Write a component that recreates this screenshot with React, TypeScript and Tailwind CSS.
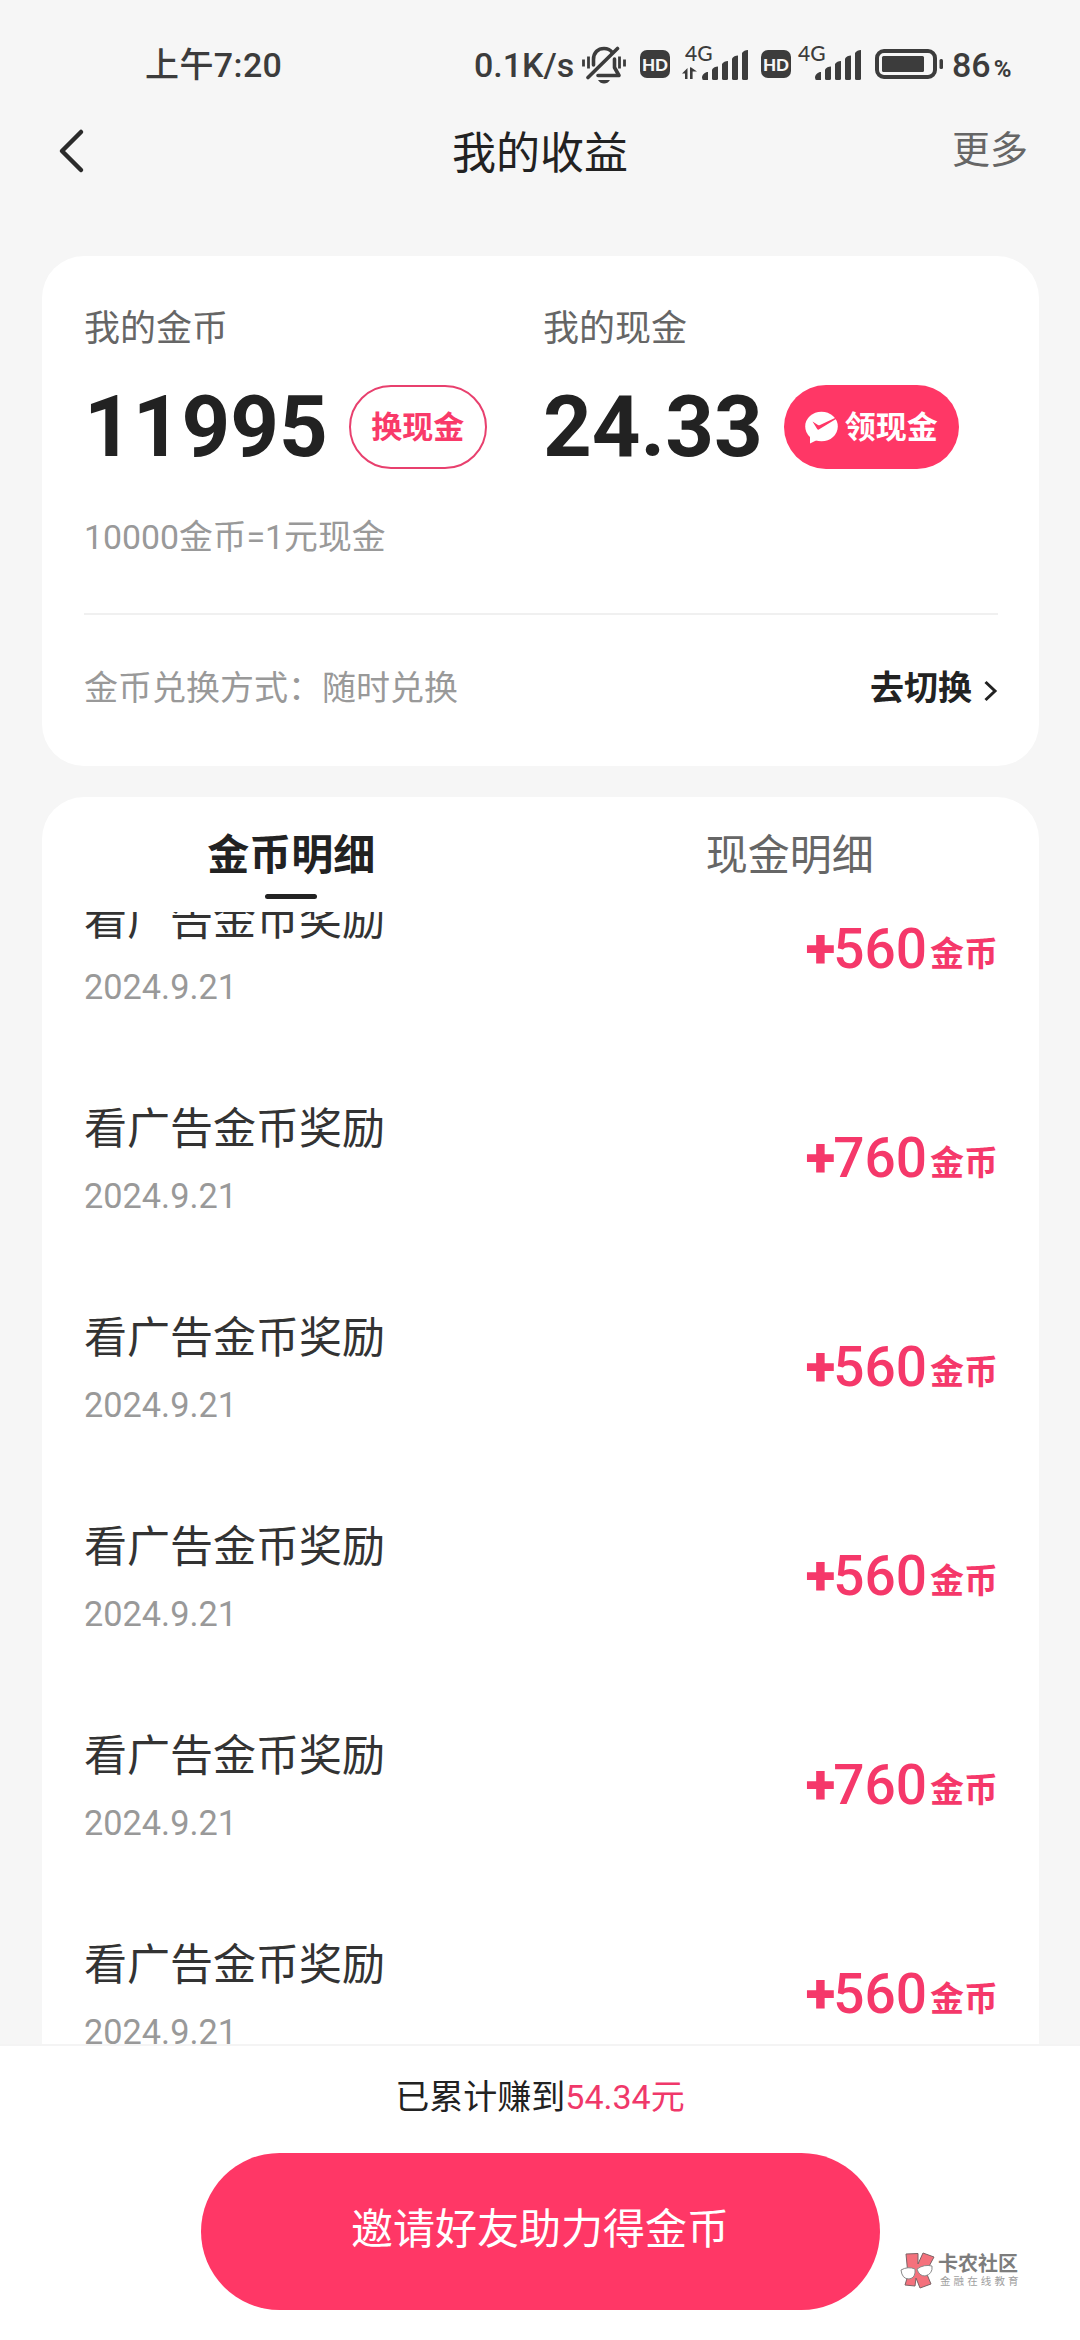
import { clsx } from "clsx";

type CoinRecord = {
  id: number;
  title: string;
  date: string;
  amount: number;
};

const RECORDS: CoinRecord[] = [
  { id: 1, title: "看广告金币奖励", date: "2024.9.21", amount: 560 },
  { id: 2, title: "看广告金币奖励", date: "2024.9.21", amount: 760 },
  { id: 3, title: "看广告金币奖励", date: "2024.9.21", amount: 560 },
  { id: 4, title: "看广告金币奖励", date: "2024.9.21", amount: 560 },
  { id: 5, title: "看广告金币奖励", date: "2024.9.21", amount: 760 },
  { id: 6, title: "看广告金币奖励", date: "2024.9.21", amount: 560 },
];

function MutedBellIcon() {
  return (
    <svg className="w-[44px] h-[38px]" viewBox="0 0 44 38" fill="none" aria-hidden="true">
      <g stroke="#3c3c3c" strokeWidth="3.6" strokeLinecap="round" strokeLinejoin="round">
        <path d="M11.5 19V13.5C11.5 6.5 16 2.500 22 2.500c3.500 0 6.500 1.500 8.300 4" />
        <path d="M32.500 13v8.500l4.500 8H16" />
        <path d="M35.500 2.500 6 31.500" />
      </g>
      <path d="M16 34h12c-1.500 2.500-3.500 3.500-6 3.500s-4.500-1-6-3.500z" fill="#3c3c3c" />
      <g stroke="#3c3c3c" strokeWidth="2.800">
        <path d="M1.500 13.500v7M6.500 10.500v12M37.500 10.500v12M42.500 13.500v7" />
      </g>
    </svg>
  );
}

function HdBadge({ className }: { className?: string }) {
  return (
    <div
      className={clsx(
        "w-[30px] h-[28px] rounded-[7px] bg-[#3c3c3c] text-[#f6f6f6] flex items-center justify-center font-[Lato] font-black text-[17px] leading-none",
        className,
      )}
    >
      HD
    </div>
  );
}

function Signal({ active, className }: { active?: boolean; className?: string }) {
  return (
    <div className={clsx("relative w-[66px] h-[36px]", className)}>
      <span className="absolute left-[3px] -top-[3px] text-[21px] leading-[24px] font-[Lato] font-medium">
        4G
      </span>
      <svg className="w-[66px] h-[36px]" viewBox="0 0 66 36" fill="#3c3c3c" aria-hidden="true">
        {active && (
          <path d="M0 29.500 5.500 24v11H3v-5.500zM8 24v11h2.600v-7.500h4.400L8.500 23z" />
        )}
        <path d="M20 33.500c0-3 3-5.500 6-5.500v8h-4.500q-1.500 0-1.500-2.500z" />
        <path d="M30 25.500q2-3 6-3V34.500q0 1.500-1.500 1.500h-3q-1.500 0-1.500-1.500z" />
        <path d="M40 20q2-3 6-3V34.500q0 1.500-1.500 1.500h-3q-1.500 0-1.500-1.500z" />
        <path d="M50 14.500q2-3 6-3V34.500q0 1.500-1.500 1.500h-3q-1.500 0-1.500-1.500z" />
        <path d="M60 9q2-3 6-3V34.500q0 1.500-1.500 1.500h-3q-1.500 0-1.500-1.500z" />
      </svg>
    </div>
  );
}

function BatteryIcon() {
  return (
    <svg className="w-[68px] h-[30px]" viewBox="0 0 68 30" fill="none" aria-hidden="true">
      <rect x="2" y="2" width="58" height="26" rx="7" stroke="#3c3c3c" strokeWidth="4" />
      <rect x="7" y="7" width="42" height="16" rx="1.500" fill="#3c3c3c" />
      <rect x="64.500" y="10" width="3.500" height="10" rx="1.500" fill="#3c3c3c" />
    </svg>
  );
}

function StatusBar() {
  return (
    <div className="h-[108px] pt-[44px] pl-[145px] flex items-start text-[#3c3c3c] text-[34px] leading-[42px] font-medium">
      <span className="w-[329px] tracking-[0.400px]">上午7:20</span>
      <span className="w-[108px]">0.1K/s</span>
      <div className="mt-[2px]">
        <MutedBellIcon />
      </div>
      <HdBadge className="ml-[14px] mt-[6px]" />
      <Signal active className="ml-[12px]" />
      <HdBadge className="ml-[13px] mt-[6px]" />
      <Signal className="ml-[4px]" />
      <div className="ml-[14px] mt-[5px]">
        <BatteryIcon />
      </div>
      <span className="ml-[9px]">
        86<span className="ml-[3px] text-[24px] font-bold">%</span>
      </span>
    </div>
  );
}

function PayCheckIcon() {
  return (
    <svg className="w-[33px] h-[33px]" viewBox="0 0 33 33" aria-hidden="true">
      <ellipse cx="16.500" cy="15.500" rx="16.300" ry="14.800" fill="#fff" />
      <path d="M5 25v7.500l8-4z" fill="#fff" />
      <path d="M7.500 10.500l5.500 3.500q1 .500 2 0L31 6.500v1.500L13.800 18.500q-1 .600-1.600-.500z" fill="#ff3766" />
    </svg>
  );
}

function BalanceCard() {
  return (
    <section className="ml-[42px] w-[997px] h-[510px] rounded-[42px] bg-white px-[42px] pt-[47px]">
      <div className="flex">
        <div className="w-[459px]">
          <p className="text-[36px] leading-[52px] text-[#666]">我的金币</p>
          <div className="mt-[30px] flex h-[84px] items-center">
            <span className="text-[85px] leading-[84px] font-bold">11995</span>
            <button className="ml-[21px] h-[84px] w-[138px] rounded-full border-2 border-[#e8406e] text-[31px] leading-none font-bold text-[#f93a69]">
              换现金
            </button>
          </div>
        </div>
        <div>
          <p className="text-[36px] leading-[52px] text-[#666]">我的现金</p>
          <div className="mt-[30px] flex h-[84px] items-center">
            <span className="text-[85px] leading-[84px] font-bold">24.33</span>
            <button className="ml-[21px] flex h-[84px] w-[175px] items-center justify-center gap-[7px] rounded-full bg-[#ff3766] text-[31px] leading-none font-bold text-white">
              <PayCheckIcon />
              领现金
            </button>
          </div>
        </div>
      </div>
      <p className="mt-[45px] text-[33.800px] leading-[48px] text-[#999]">10000金币=1元现金</p>
      <div className="mt-[51px] h-[2px] w-[914px] bg-[#f0f0f0]" />
      <div className="mt-[49px] flex h-[48px] w-[914px] items-center justify-between">
        <span className="text-[34px] leading-[48px] text-[#999]">金币兑换方式：随时兑换</span>
        <button className="flex items-center text-[34px] leading-[48px] font-bold">
          去切换
          <svg className="mt-[5px] ml-[11px] h-[22px] w-[15px]" viewBox="0 0 15 22" fill="none" aria-hidden="true">
            <path d="M2.500 2 12 11 2.500 20" stroke="#222" strokeWidth="3" />
          </svg>
        </button>
      </div>
    </section>
  );
}

function RecordRow({ record }: { record: CoinRecord }) {
  return (
    <li className="flex h-[209px] shrink-0 items-center justify-between">
      <div>
        <p className="-mt-[2px] text-[43px] leading-[60px] text-[#333]">{record.title}</p>
        <p className="mt-[14px] text-[34.300px] leading-[46px] text-[#999]">{record.date}</p>
      </div>
      <p className="-mt-[4px] flex items-end text-[#f5386a]">
        <span className="text-[55px] leading-[64px] font-medium">
          <span className="font-black tracking-[-2px]">+</span>
          {record.amount}
        </span>
        <span className="mb-[2px] ml-[3px] text-[34px] leading-[50px] font-bold">金币</span>
      </p>
    </li>
  );
}

function RecordsCard() {
  return (
    <section className="mt-[31px] ml-[42px] flex h-[1247px] w-[997px] flex-col rounded-t-[42px] bg-white">
      <div className="flex h-[115px] shrink-0 text-[42px] leading-[60px]">
        <div className="flex flex-1 flex-col items-center pt-[29px]">
          <span className="font-bold">金币明细</span>
          <span className="mt-[8px] h-[5px] w-[52px] rounded-full bg-[#222]" />
        </div>
        <div className="flex flex-1 flex-col items-center pt-[29px] text-[#666]">现金明细</div>
      </div>
      <ul className="flex min-h-0 flex-1 flex-col overflow-hidden pr-[41px] pl-[42px]">
        <li className="-mt-[66px]" />
        {RECORDS.map((record) => (
          <RecordRow key={record.id} record={record} />
        ))}
      </ul>
    </section>
  );
}

function Watermark() {
  return (
    <div className="absolute top-[206px] left-[900px] flex text-[#7d7d7d]">
      <svg className="h-[37px] w-[35px]" viewBox="0 0 35 37" aria-hidden="true">
        <g fill="#f4717c" stroke="#7b6366" strokeWidth="1" strokeLinejoin="round">
          <path d="M6 2 18 1.500V12L23 1l11 4-8 15 5 12-11 4-4-10-1 8-10-1 3-10z" />
        </g>
        <g fill="#fff" stroke="#8a8a8a" strokeWidth="1">
          <path d="M1 18q7-4 14-1 1 9-6 10-7 0-8-9z" />
          <path d="M17 17q7-5 15-3 1 8-7 10-6 0-8-7z" />
        </g>
      </svg>
      <div className="ml-[3px]">
        <p className="text-[20px] leading-[24px] font-bold">卡农社区</p>
        <p className="ml-[2px] text-[10.500px] leading-[12px] tracking-[3.100px] whitespace-nowrap text-[#a0a0a0]">
          金融在线教育
        </p>
      </div>
    </div>
  );
}

export default function App() {
  return (
    <div
      className="h-[2340px] w-[1080px] overflow-hidden bg-[#f6f6f6] font-[Roboto,'Noto_Sans_CJK_SC',sans-serif] text-[#222]"
      lang="zh-CN"
    >
      <StatusBar />

      {/* Header */}
      <header className="grid h-[148px] grid-cols-3 items-start px-[52px] pt-[12px]">
        <svg className="mt-[8px] ml-[4px] h-[46px] w-[30px]" viewBox="0 0 30 46" fill="none" aria-hidden="true">
          <path
            d="M25 4 6 23 25 42"
            stroke="#2b2b2b"
            strokeWidth="4.500"
            strokeLinecap="round"
            strokeLinejoin="round"
          />
        </svg>
        <h1 className="mt-[2px] text-center text-[44px] leading-[64px]">我的收益</h1>
        <button className="mt-px text-right text-[38px] leading-[58px] text-[#666]">更多</button>
      </header>

      <BalanceCard />
      <RecordsCard />

      {/* Invite footer */}
      <footer className="relative flex h-[296px] flex-col items-center border-t-2 border-[#f4f4f4] bg-white">
        <p className="mt-[26px] text-[34px] leading-[50px]">
          已累计赚到<span className="text-[#f0386a]">54.34元</span>
        </p>
        <button className="mt-[31px] h-[157px] w-[679px] rounded-full bg-[#ff3766] pb-[4px] text-[42px] leading-none text-white">
          邀请好友助力得金币
        </button>
        <Watermark />
      </footer>
    </div>
  );
}
